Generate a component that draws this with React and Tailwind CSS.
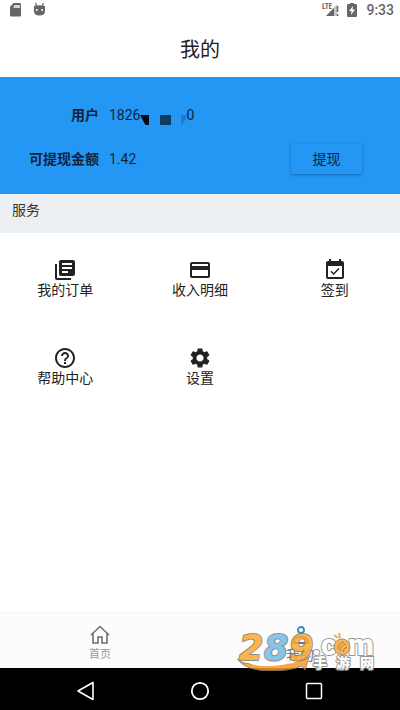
import {
  MdCreditCard,
  MdEventAvailable,
  MdHelpOutline,
  MdLibraryBooks,
  MdSettings
} from 'react-icons/md'

const services = [
  { title: '我的订单', icon: MdLibraryBooks },
  { title: '收入明细', icon: MdCreditCard },
  { title: '签到', icon: MdEventAvailable },
  { title: '帮助中心', icon: MdHelpOutline },
  { title: '设置', icon: MdSettings }
]

function StatusBar() {
  return (
    <div className="flex h-5 items-center justify-between pr-1.5 pl-2 text-[#666]">
      <div className="flex items-center gap-2">
        <svg className="h-4 w-4" viewBox="0 0 16 16" fill="currentColor">
          <path d="M5.500 1H12q1 0 1 1v11.500q0 1-1 1H3q-1 0-1-1V5z" />
          <path d="M6 3h6v3H5.500z" fill="#d5d5d5" />
        </svg>
        <svg className="h-4 w-4" viewBox="0 0 16 16" fill="currentColor">
          <path d="M3.700 1l.8 3M11.300 1l-.8 3" stroke="currentColor" strokeWidth="1.200" />
          <path d="M2 4q5.500-1.500 11 0v5q0 4.500-5.500 4.500T2 9z" />
          <circle cx="4.800" cy="8" r="1" fill="#fff" />
          <circle cx="10.200" cy="8" r="1" fill="#fff" />
        </svg>
      </div>
      <div className="flex items-center gap-1">
        <svg className="h-5 w-5" viewBox="0 0 20 20">
          <path d="M15 4v12H4z" fill="#c8c8c8" />
          <path d="M12 8v8H4z" fill="#666" />
          <path d="M15.500 6v6M15.500 14v2" stroke="#666" strokeWidth="1.500" />
          <text x="0" y="9" fontSize="8" fontWeight="500" fontFamily="'Open Sans Condensed', Roboto, sans-serif" fill="#666">LTE</text>
        </svg>
        <svg className="h-4 w-3" viewBox="0 0 12 16" fill="currentColor">
          <path d="M4 1h4v1h2q1 0 1 1v11q0 1-1 1H2q-1 0-1-1V3q0-1 1-1h2z" />
          <path d="M7 4L3 9h2.500L5 13l4-5.500H6.500z" fill="#fff" />
        </svg>
        <span className="pl-1 text-sm leading-5 font-medium">9:33</span>
      </div>
    </div>
  )
}

function AccountPanel() {
  return (
    <section className="flex h-[117px] flex-col justify-center gap-3 bg-[#2397f3] pt-0.5 text-sm text-[#14233b]">
      <div className="flex h-8 items-center gap-2.5">
        <span className="w-[99px] text-right font-bold">用户</span>
        <span className="flex items-center">
          1826
          <svg className="h-5 w-[46px]" viewBox="0 0 46 20">
            <path d="M0 10h9v11H6z" fill="#050a12" />
            <path d="M20 10h11v11H20z" fill="#0b3c61" />
            <path d="M41 10h5v4l-5 7z" fill="#1b7dcc" />
          </svg>
          0
        </span>
      </div>
      <div className="flex h-8 items-center gap-2.5 pr-[38px]">
        <span className="w-[99px] text-right font-bold">可提现金额</span>
        <span className="flex-1">1.42</span>
        <button className="h-[30px] w-[71px] rounded-xs shadow-[0_1px_3px_rgba(0,40,90,0.45)]">提现</button>
      </div>
    </section>
  )
}

function TabBar() {
  return (
    <nav className="grid h-14 grid-cols-2 border-t border-[#f5f5f5] bg-[#fcfcfc]">
      <a href="#home" className="flex flex-col items-center pt-3 text-[11px] leading-5 text-[#999]">
        <svg className="h-5 w-5" viewBox="0 0 20 20" fill="none" stroke="#707070" strokeWidth="1.600">
          <path d="M1 10l9-8.500 9 8.500M3 8.500V18h5v-6h4v6h5V8.500" />
        </svg>
        首页
      </a>
      <a href="#mine" className="flex flex-col items-center pt-3 text-sm leading-5 text-[#777]">
        <svg className="h-5 w-5" viewBox="0 0 20 20" fill="none" strokeWidth="1.800">
          <circle cx="11" cy="5" r="3" stroke="#2a8fc8" />
          <path d="M4 18v-1q0-5 7-5t7 5v1z" stroke="#777" />
        </svg>
        我的
      </a>
    </nav>
  )
}

function SiteMark() {
  return (
    <svg className="pointer-events-none absolute right-6 bottom-[39px] h-12 w-[140px] opacity-85" viewBox="0 0 140 48">
      <path
        d="M1 36q3 4 14 5 25 2 49-3l-2-2 11-2-4 13-3-4q-12 5-31 5Q10 48 1 36z"
        fill="#f79b24"
        stroke="#8a7a62"
      />
      <path d="M10 38q24 3 52-2l2 2q-20 6-38 5-12-1-16-5z" fill="#fff" />
      <text
        y="37"
        fontSize="35"
        fontWeight="700"
        fontStyle="italic"
        fontFamily="'DejaVu Sans', sans-serif"
        fill="#fba931"
        stroke="#8a7a62"
        strokeWidth="2"
        strokeLinejoin="round"
        paintOrder="stroke"
      >
        <tspan x="3">2</tspan>
        <tspan x="28" fill="#6fbdeb">8</tspan>
        <tspan x="53">9</tspan>
      </text>
      <g fill="#fff" stroke="#888" strokeWidth="2" strokeLinejoin="round" paintOrder="stroke">
        <g fontSize="30" fontWeight="900" fontFamily="Roboto, sans-serif">
          <text x="76" y="32">.c</text>
          <text x="112" y="32">m</text>
        </g>
        <text y="45" fontSize="14" fontWeight="900" fontFamily="'Noto Sans CJK SC', sans-serif">
          <tspan x="77">手</tspan>
          <tspan x="100">游</tspan>
          <tspan x="124">网</tspan>
        </text>
      </g>
      <circle cx="106" cy="24" r="8" fill="#fba931" stroke="#8a7a62" />
      <path d="M102 15l-4-3M104 15l-1-5" stroke="#f79b24" strokeWidth="2" />
      <path d="M102 26q0-6 6-7M104 28q0-6 6-7M107 29q0-4 4-5" stroke="#8f6d35" fill="none" />
    </svg>
  )
}

function SystemNav() {
  return (
    <div className="flex h-[42px] items-center justify-center gap-[94px] bg-black pt-1 text-white">
      <button aria-label="Back">
        <svg className="h-5 w-5" viewBox="0 0 20 20" fill="none" stroke="currentColor" strokeWidth="1.600">
          <path d="M17 1.500v17L2 10z" strokeLinejoin="round" />
        </svg>
      </button>
      <button aria-label="Home">
        <svg className="h-5 w-5" viewBox="0 0 20 20" fill="none" stroke="currentColor" strokeWidth="1.800">
          <circle cx="10" cy="10" r="8.200" />
        </svg>
      </button>
      <button aria-label="Recents">
        <svg className="h-5 w-5" viewBox="0 0 20 20" fill="none" stroke="currentColor" strokeWidth="1.500">
          <rect x="2.500" y="2.500" width="15" height="15" rx="1" />
        </svg>
      </button>
    </div>
  )
}

export default function App() {
  return (
    <div className="relative flex min-h-screen flex-col bg-white font-[Roboto,'Noto_Sans_CJK_SC',sans-serif] text-[#222]">
      <StatusBar />
      <header className="flex h-[57px] items-center justify-center pt-0.5">
        <h1 className="text-xl">我的</h1>
      </header>
      <AccountPanel />
      <h2 className="h-[39px] bg-[#ecf0f2] px-3 pt-1.5 text-sm text-[#333]">服务</h2>
      <main className="grid flex-1 auto-rows-max grid-cols-3 gap-x-5 gap-y-12 px-2 pt-[25px]">
        {services.map((service) => {
          const Icon = service.icon
          return (
            <button key={service.title} className="flex flex-col items-center text-sm leading-4">
              <Icon className="h-6 w-6" />
              {service.title}
            </button>
          )
        })}
      </main>
      <TabBar />
      <SystemNav />
      <SiteMark />
    </div>
  )
}
